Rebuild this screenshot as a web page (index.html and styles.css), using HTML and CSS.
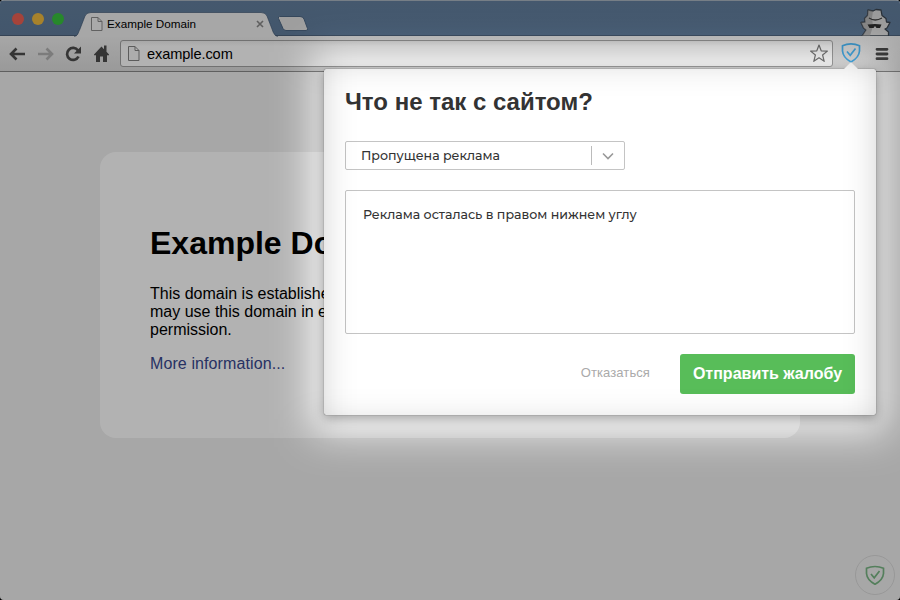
FILE: index.html
```html
<!DOCTYPE html>
<html lang="ru">
<head>
<meta charset="utf-8">
<title>Example Domain</title>
<link rel="stylesheet" href="styles.css">
</head>
<body>
<div class="browser">
  <header class="tabbar">
    <div class="lights"><i class="light red"></i><i class="light yellow"></i><i class="light green"></i></div>
    <div class="tab">
      <svg class="tab-shape" width="204" height="25" viewBox="0 0 204 25"><path d="M0 25C4 24 4 21 6 17L11 4Q12.500 .5 17 .5H187Q191.500 .5 193 4L198 17Q200 24 204 25Z" fill="#efefef"/><path d="M0 24.500C4 24 4 21 6 17L11 4Q12.500 .5 17 .5H187Q191.500 .5 193 4L198 17Q200 24 204 24.500" fill="none" stroke="#364f6c" stroke-opacity=".6"/></svg>
      <svg class="page-icon" width="12" height="15" viewBox="0 0 12 15"><path d="M.5 1.500h6.500l4 4v9H.5zM7 1.500v4h4" fill="#f4f4f4" stroke="#8b8b8b"/></svg>
      <span class="tab-title">Example Domain</span>
      <svg class="tab-close" width="8" height="8" viewBox="0 0 8 8"><path d="M1 1l6 6M7 1L1 7" stroke="#888" stroke-width="1.600"/></svg>
    </div>
    <svg class="new-tab" width="34" height="18" viewBox="0 0 34 18"><path d="M3.500 1.500H24Q27 1.500 28 4L31.500 13.500Q32 15.500 30 15.500H10Q8 15.500 7 13.500L2.500 3.500Q2 1.500 3.500 1.500Z" fill="#e2e2e2" stroke="#4c6683"/></svg>
    <svg class="incognito" width="36" height="28" viewBox="0 0 36 28">
      <path d="M10 2l5 1 3-1.500 5 .5 1 5.500 4 3 .5 3.500 3.500.5-3 5.500-2 1 3.500 3V28H4l4-6-2.500-2L3 14.500l4-.5-.5-3.500 3-3z" fill="#dcdcdc" stroke="#3b4550" stroke-width="1.300" stroke-linejoin="round"/>
      <path d="M10 2l5 1-1 7 1 8-3 10H4l4-6-2.500-2L3 14.500l4-.5-.5-3.500 3-3z" fill="#9b9b9b" opacity=".55"/>
      <path d="M11 10q6 4 13 0" fill="none" stroke="#444" stroke-width="1.400"/>
      <path d="M9.500 16.500q8-1 14 0l-1.500 3.500h-3.500l-1.500-2-1.500 2h-4z" fill="#303030"/>
    </svg>
  </header>
  <nav class="toolbar">
    <svg class="nav-icons" width="104" height="20" viewBox="0 0 104 20">
      <path d="M17 10H3M8.500 4.500L3 10l5.500 5.500" fill="none" stroke="#4c4c4c" stroke-width="2.600"/>
      <path d="M30 10h14M38.500 4.500L44 10l-5.500 5.500" fill="none" stroke="#b2b2b2" stroke-width="2.600"/>
      <path d="M70 6.500A6 6 0 1 0 70.500 12.500" fill="none" stroke="#4c4c4c" stroke-width="2.700"/><path d="M73 2.500v7h-7z" fill="#4c4c4c"/>
      <path d="M86 10.500L93.500 2.500l2.500 2.700V1.500h2.500v6.300l2.500 2.700v.8H99V18h-4v-5.500h-3V18h-4v-6.700h-2z" fill="#4c4c4c"/>
    </svg>
    <div class="address">
      <svg class="page-icon" width="12" height="15" viewBox="0 0 12 15"><path d="M.5 .5h6.500l4 4v10H.5zM7 .5v4h4" fill="#f8f8f8" stroke="#858585"/></svg>
      <span>example.com</span>
      <svg class="star" width="20" height="19" viewBox="0 0 20 19"><path d="M10 1l2.200 5.800 6.200.3-4.800 3.900 1.600 6.300-5.200-3.500-5.200 3.500 1.600-6.300-4.800-3.900 6.200-.3z" fill="#fff" stroke="#777" stroke-width="1.200" stroke-linejoin="round"/></svg>
    </div>
    <svg class="shield" width="20" height="20" viewBox="0 0 20 20"><path d="M10 .9Q14.500 .9 18.500 2.700V8Q18 14.500 10 19Q2 14.500 1.500 8V2.700Q5.500 .9 10 .9Z" fill="none" stroke="#48aee9" stroke-width="1.700"/><path d="M6 8.500l3.200 3.800L14.500 5.500" fill="none" stroke="#48aee9" stroke-width="1.700"/></svg>
    <svg class="menu" width="14" height="14" viewBox="0 0 14 14"><path d="M2 2.300h10M2 7h10M2 11.700h10" stroke="#474747" stroke-width="2.800" stroke-linecap="round"/></svg>
  </nav>
  <main class="page">
    <article class="card">
      <h1>Example Domain</h1>
      <p>This domain is established to be used for illustrative examples. You<br>may use this domain in examples without prior coordination or asking<br>permission.</p>
      <a>More information...</a>
    </article>
    <div class="badge"><svg width="20" height="20" viewBox="0 0 20 20"><path d="M10 1.500Q14.500 1.500 18.500 3.300V8.500Q18 15 10 19.300Q2 15 1.500 8.500V3.300Q5.500 1.500 10 1.500Z" fill="none" stroke="#79b684" stroke-width="1.700"/><path d="M6 9l3.200 3.800L14.500 6" fill="none" stroke="#79b684" stroke-width="1.700"/></svg></div>
  </main>
  <section class="popup">
    <svg class="arrow" width="16" height="8" viewBox="0 0 16 8"><path d="M0 8L8 0l8 8z" fill="#fff"/></svg>
    <h2>Что не так с сайтом?</h2>
    <div class="select"><span class="select-text">Пропущена реклама</span><span class="chevron"><svg width="12" height="8" viewBox="0 0 12 8"><path d="M1 1.500l5 5 5-5" fill="none" stroke="#999" stroke-width="1.600"/></svg></span></div>
    <div class="comment"><span class="comment-text">Реклама осталась в правом нижнем углу</span></div>
    <div class="actions"><span class="cancel">Отказаться</span><span class="submit"><span class="submit-text">Отправить жалобу</span></span></div>
  </section>
  <div class="spotlight"></div>
</div>
</body>
</html>
```

FILE: styles.css
```css
* { box-sizing: border-box; }
body { margin: 0; background: #000; font-family: "Liberation Sans", Arial, sans-serif; }
svg { display: block; flex: none; }
.browser { position: relative; width: 900px; height: 600px; overflow: hidden; border-radius: 4px; background: #f0f0f0; display: flex; flex-direction: column; }
.tabbar { height: 36px; flex: none; display: flex; background: linear-gradient(#637f9e, #607c9b); border-top: 1px solid #a9b5c0; border-bottom: 1px solid #4c617a; }
.lights { display: flex; gap: 8px; padding: 12px 0 0 12px; width: 76px; }
.light { width: 12px; height: 12px; border-radius: 50%; }
.red { background: #ed6054; }
.yellow { background: #f0ba3e; }
.green { background: #38c33e; }
.tab { position: relative; display: flex; width: 200px; padding: 15px 0 0 15px; }
.tab-shape { position: absolute; left: -2px; top: 11px; }
.tab .page-icon { position: relative; }
.tab-title { position: relative; margin-left: 4px; width: 146px; font-size: 11.700px; line-height: 15px; white-space: nowrap; color: #000; }
.tab-close { position: relative; margin: 4px 0 0 3px; }
.new-tab { margin: 14px 0 0 0; }
.incognito { margin: 7px 6px 0 auto; }
.toolbar { height: 36px; flex: none; display: flex; align-items: center; background: linear-gradient(#efefef, #dcdcdc); border-bottom: 1px solid #888; padding: 0 11px 0 8px; }
.nav-icons { margin-right: 8px; }
.address { width: 713px; height: 27px; border: 1px solid #a2a2a2; border-radius: 3px; background: linear-gradient(#f0f0f0, #fff 5px); display: flex; align-items: center; padding: 0 3px 0 7px; font-size: 14.600px; letter-spacing: -.1px; }
.address span { margin-left: 7px; }
.star { margin-left: auto; }
.shield { margin: 0 0 1px 8px; }
.menu { margin-left: auto; }
.page { flex: 1; position: relative; padding: 80px 100px; }
.card { width: 700px; height: 286px; border-radius: 16px; background: #fff; padding: 72px 50px; }
h1 { margin: 0; font-size: 32px; line-height: 38px; white-space: nowrap; }
.card p { margin: 23px 0 16px; font-size: 16px; line-height: 18px; white-space: nowrap; }
.card a { font-size: 16px; line-height: 18px; letter-spacing: .1px; color: #38488f; }
.badge { position: absolute; right: 5px; bottom: 5px; width: 40px; height: 40px; border: 1px solid #d9d9d9; border-radius: 50%; display: grid; place-items: center; }
.popup { position: absolute; left: 324px; top: 69px; width: 552px; height: 346px; padding: 17px 21px 21px; background: #fff; border-radius: 2px; box-shadow: 0 0 1px rgba(0,0,0,.7), 0 3px 12px rgba(0,0,0,.35); color: #333; }
.arrow { position: absolute; left: 519px; top: -7px; }
h2 { margin: 0 0 24px; font-size: 24px; line-height: 31px; white-space: nowrap; }
.select { width: 280px; height: 29px; border: 1px solid #c4c4c4; border-radius: 2px; display: flex; align-items: center; padding-left: 15px; font: 500 12.600px Montserrat, "Noto Sans", sans-serif; }
.select-text { white-space: nowrap; }
.comment-text { white-space: nowrap; }
.chevron { margin-left: auto; width: 33px; height: 19px; border-left: 1px solid #bbb; display: grid; place-items: center; }
.comment { height: 144px; margin-top: 20px; border: 1px solid #c4c4c4; border-radius: 2px; padding: 14px 17px; font: 500 12.600px/20px Montserrat, "Noto Sans", sans-serif; }
.actions { display: flex; justify-content: flex-end; align-items: center; margin-top: 20px; }
.cancel { font-size: 13px; letter-spacing: .1px; color: #aaa; margin-right: 30px; padding-bottom: 3px; }
.submit { width: 175px; height: 40px; border-radius: 3px; background: #58bd59; color: #fff; display: grid; place-items: center; font-size: 16px; font-weight: bold; white-space: nowrap; }
.spotlight { position: absolute; left: -687px; top: -948px; width: 2574px; height: 2381px; border: 1000px solid rgba(0,0,0,.3); filter: blur(20px); pointer-events: none; }
```
